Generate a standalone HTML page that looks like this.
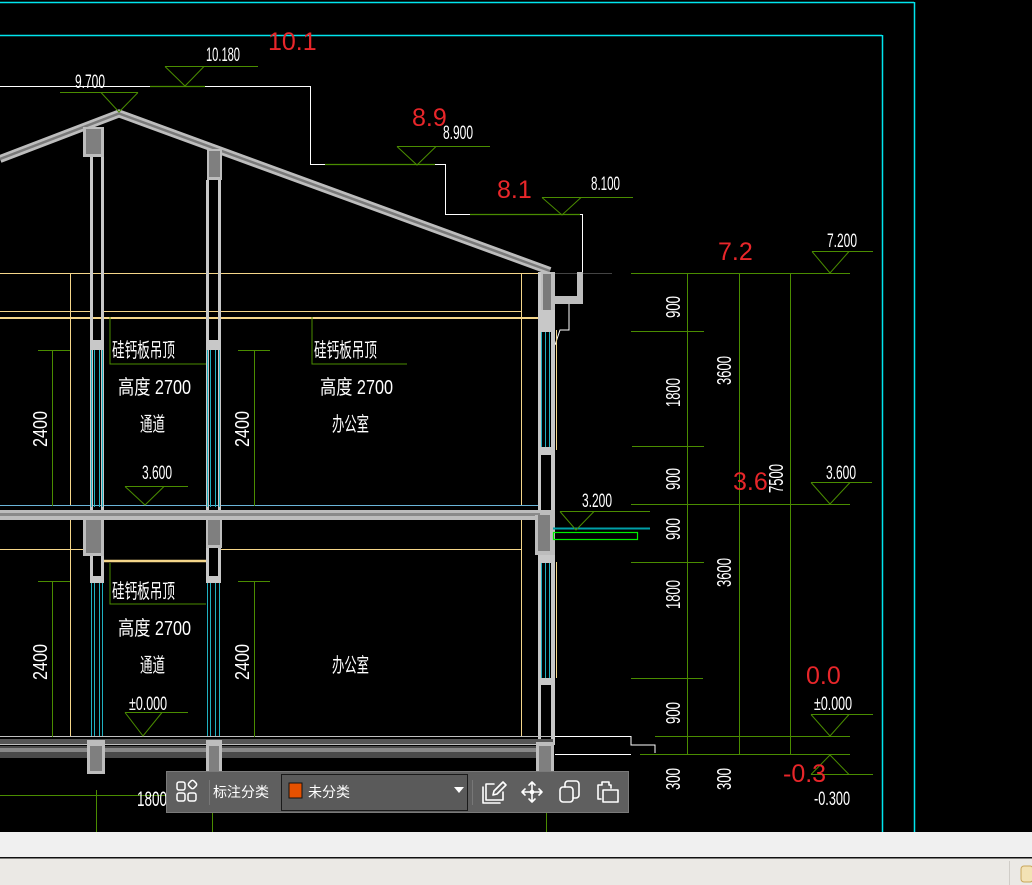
<!DOCTYPE html>
<html><head><meta charset="utf-8"><style>
html,body{margin:0;padding:0;background:#000;width:1032px;height:885px;overflow:hidden}
svg{display:block}
.t{font-family:"Liberation Sans Narrow","Liberation Sans","Noto Sans CJK SC",sans-serif;fill:#fff}
.c{font-family:"Liberation Sans","Noto Sans CJK SC",sans-serif;fill:#fff}
.r{font-family:"Liberation Sans",sans-serif;fill:#e8262a;font-size:25px}
</style></head><body>
<svg width="1032" height="885" viewBox="0 0 1032 885" xmlns="http://www.w3.org/2000/svg">
<rect width="1032" height="885" fill="#000"/>
<line x1="0" y1="2.5" x2="914" y2="2.5" stroke="#00e5ee" stroke-width="1.5"/>
<line x1="0" y1="35.5" x2="882" y2="35.5" stroke="#00e5ee" stroke-width="1.5"/>
<line x1="914.5" y1="2" x2="914.5" y2="832" stroke="#00e5ee" stroke-width="1.5"/>
<line x1="882.5" y1="35" x2="882.5" y2="832" stroke="#00e5ee" stroke-width="1.5"/>

<polyline points="0,86.5 310.5,86.5 310.5,164.5 445.5,164.5 445.5,214.5 582.5,214.5 582.5,297 569,297 569,330 560,330 555,345" fill="none" stroke="#fff" stroke-width="1"/>
<line x1="150" y1="86.5" x2="205" y2="86.5" stroke="#4a8c00" stroke-width="1.2"/>
<line x1="325" y1="164.5" x2="435" y2="164.5" stroke="#4a8c00" stroke-width="1.2"/>
<line x1="470" y1="214.5" x2="580" y2="214.5" stroke="#4a8c00" stroke-width="1.2"/>

<g stroke="#f5d68a" fill="none">
<line x1="0" y1="273.5" x2="540" y2="273.5"/>
<line x1="0" y1="311.5" x2="90" y2="311.5"/>
<line x1="104" y1="311.5" x2="522" y2="311.5"/>
<line x1="0" y1="318" x2="540" y2="318" stroke-width="2"/>
<line x1="70.5" y1="273" x2="70.5" y2="505"/>
<line x1="521.5" y1="273" x2="521.5" y2="505"/>
<line x1="0" y1="549.5" x2="90" y2="549.5"/>
<line x1="220" y1="549.5" x2="522" y2="549.5"/>
<line x1="104" y1="561" x2="207" y2="561" stroke-width="2.5"/>
<line x1="70.5" y1="520" x2="70.5" y2="737"/>
<line x1="521.5" y1="520" x2="521.5" y2="737"/>
<line x1="556.5" y1="330" x2="556.5" y2="450"/>
<line x1="556.5" y1="562" x2="556.5" y2="678"/>
</g>
<line x1="0" y1="505.5" x2="540" y2="505.5" stroke="#6ab4d8"/>
<line x1="555" y1="273.5" x2="612" y2="273.5" stroke="#444"/>

<polyline points="0,159 119,113.5 550,271" fill="none" stroke="#bdbdbd" stroke-width="8"/>
<polyline points="0,159 119,113.5 550,271" fill="none" stroke="#7a7a7a" stroke-width="2.5"/>
<path d="M540 272 h15 v24 h22 v-24 h6 v32 h-28 v14 h-15z" fill="#bdbdbd"/>
<path d="M543 274 h8 v38 h-8z" fill="#7a7a7a"/>

<rect x="83" y="127" width="21" height="30" fill="#bdbdbd"/><rect x="86" y="129" width="15" height="25" fill="#7f7f7f"/>
<rect x="207" y="149" width="15" height="31" fill="#bdbdbd"/><rect x="209" y="151" width="11" height="26" fill="#7f7f7f"/>
<g fill="#c8c8c8">
<rect x="90" y="157" width="3" height="353"/><rect x="101" y="157" width="3" height="353"/>
<rect x="206" y="180" width="3" height="330"/><rect x="218" y="180" width="3" height="330"/>
<rect x="90" y="340" width="14" height="10"/><rect x="206" y="340" width="15" height="10"/>
<rect x="538" y="272" width="3" height="240"/><rect x="551" y="310" width="4" height="200"/>
<rect x="539" y="310" width="16" height="22"/><rect x="539" y="447" width="16" height="8"/>
</g>
<g stroke="#1fb0c0" stroke-width="1">
<line x1="94.5" y1="350" x2="94.5" y2="507"/><line x1="99.5" y1="350" x2="99.5" y2="507"/><line x1="91.5" y1="350" x2="91.5" y2="507"/><line x1="102.5" y1="350" x2="102.5" y2="507"/>
<line x1="210.5" y1="350" x2="210.5" y2="507"/><line x1="215.5" y1="350" x2="215.5" y2="507"/><line x1="207.5" y1="350" x2="207.5" y2="507"/><line x1="219.5" y1="350" x2="219.5" y2="507"/>
<line x1="541.5" y1="332" x2="541.5" y2="447"/><line x1="545.5" y1="332" x2="545.5" y2="447"/><line x1="549.5" y1="332" x2="549.5" y2="447"/>
<line x1="94.5" y1="583" x2="94.5" y2="737"/><line x1="99.5" y1="583" x2="99.5" y2="737"/><line x1="91.5" y1="583" x2="91.5" y2="737"/><line x1="102.5" y1="583" x2="102.5" y2="737"/>
<line x1="210.5" y1="583" x2="210.5" y2="737"/><line x1="215.5" y1="583" x2="215.5" y2="737"/><line x1="207.5" y1="583" x2="207.5" y2="737"/><line x1="219.5" y1="583" x2="219.5" y2="737"/>
<line x1="541.5" y1="562" x2="541.5" y2="678"/><line x1="545.5" y1="562" x2="545.5" y2="678"/><line x1="549.5" y1="562" x2="549.5" y2="678"/>
</g>
<rect x="0" y="510" width="555" height="10" fill="#bdbdbd"/>
<rect x="0" y="513" width="540" height="3" fill="#8a8a8a"/>
<rect x="83" y="520" width="21" height="36" fill="#bdbdbd"/><rect x="86" y="520" width="15" height="33" fill="#7f7f7f"/>
<rect x="206" y="520" width="16" height="28" fill="#bdbdbd"/><rect x="208" y="520" width="12" height="25" fill="#7f7f7f"/>
<rect x="535" y="515" width="20" height="40" fill="#bdbdbd"/><rect x="538" y="515" width="12" height="36" fill="#7f7f7f"/>
<g fill="#c8c8c8">
<rect x="90" y="556" width="3" height="25"/><rect x="101" y="556" width="3" height="25"/><rect x="90" y="576" width="14" height="7"/>
<rect x="206" y="548" width="3" height="35"/><rect x="218" y="548" width="3" height="35"/><rect x="206" y="576" width="15" height="7"/>
<rect x="538" y="555" width="3" height="190"/><rect x="551" y="555" width="4" height="190"/>
<rect x="539" y="555" width="16" height="8"/><rect x="539" y="678" width="16" height="7"/>
</g>
<line x1="0" y1="736.5" x2="553" y2="736.5" stroke="#c0c0c0"/>
<rect x="0" y="739" width="553" height="5" fill="#555"/>
<line x1="0" y1="744.5" x2="553" y2="744.5" stroke="#c0c0c0"/>
<rect x="0" y="746" width="553" height="12" fill="#4a4a4a"/>
<rect x="0" y="748" width="553" height="4" fill="#888"/>
<g fill="#bdbdbd"><rect x="87" y="740" width="18" height="34"/><rect x="206" y="740" width="16" height="34"/><rect x="536" y="742" width="18" height="32"/></g>
<g fill="#7f7f7f"><rect x="90" y="746" width="12" height="25"/><rect x="209" y="746" width="10" height="25"/><rect x="539" y="746" width="12" height="25"/></g>
<polyline points="555,736.5 631,736.5 631,745 655,745 655,753" fill="none" stroke="#fff"/>
<line x1="555" y1="754.5" x2="631" y2="754.5" stroke="#fff"/>

<line x1="553" y1="528.5" x2="650" y2="528.5" stroke="#00a0a8" stroke-width="2"/>
<rect x="553.5" y="532.5" width="84" height="7" fill="none" stroke="#00ee00" stroke-width="1.2"/>

<g stroke="#4a8c00" stroke-width="1" fill="none">
<line x1="52.5" y1="350" x2="52.5" y2="506"/><line x1="38" y1="350.5" x2="70" y2="350.5"/>
<line x1="254.5" y1="350" x2="254.5" y2="506"/><line x1="238" y1="350.5" x2="270" y2="350.5"/>
<line x1="52.5" y1="581" x2="52.5" y2="737"/><line x1="38" y1="581.5" x2="70" y2="581.5"/>
<line x1="254.5" y1="581" x2="254.5" y2="737"/><line x1="238" y1="581.5" x2="270" y2="581.5"/>
<polyline points="110,317 110,364 206,364"/><polyline points="312,317 312,364 407,364"/>
<polyline points="110,563 110,604 206,604"/>
<polyline points="165,66.5 258,66.5"/><polyline points="165,66.5 185,86 204,66.5"/>
<polyline points="60,92.5 138,92.5"/><polyline points="101,92.5 119,112 138,92.5"/>
<polyline points="397,146.5 490,146.5"/><polyline points="397,146.5 417,165 436,146.5"/>
<polyline points="542,197.5 633,197.5"/><polyline points="542,197.5 562,215 581,197.5"/>
<polyline points="125,486.5 188,486.5"/><polyline points="125,486.5 145,505 164,486.5"/>
<polyline points="125,712.5 188,712.5"/><polyline points="125,712.5 143,736 162,712.5"/>
<polyline points="560,511.5 650,511.5"/><polyline points="560,511.5 576,530 594,511.5"/>
<line x1="631" y1="273.5" x2="850" y2="273.5"/><line x1="631" y1="331.5" x2="704" y2="331.5"/>
<line x1="632" y1="446.5" x2="704" y2="446.5"/><line x1="631" y1="504.5" x2="850" y2="504.5"/>
<line x1="631" y1="562.5" x2="704" y2="562.5"/><line x1="631" y1="678.5" x2="703" y2="678.5"/>
<line x1="655" y1="736.5" x2="850" y2="736.5"/><line x1="640" y1="754.5" x2="850" y2="754.5"/>
<line x1="687.5" y1="273" x2="687.5" y2="755"/><line x1="739.5" y1="273" x2="739.5" y2="755"/><line x1="790.5" y1="273" x2="790.5" y2="755"/>
<polyline points="812,251.5 873,251.5"/><polyline points="812,251.5 830,273 849,251.5"/>
<polyline points="811,482.5 872,482.5"/><polyline points="811,482.5 830,504 850,482.5"/>
<polyline points="811,714.5 873,714.5"/><polyline points="811,714.5 830,736 849,714.5"/>
<polyline points="811,774.5 873,774.5"/><polyline points="811,774.5 830,755 849,774.5"/>
<line x1="0" y1="795.5" x2="170" y2="795.5"/><line x1="96.5" y1="790" x2="96.5" y2="832"/>
<line x1="212.5" y1="813" x2="212.5" y2="832"/><line x1="546.5" y1="813" x2="546.5" y2="832"/>
</g>

<g class="t">
<text x="206" y="61" font-size="19" textLength="34" lengthAdjust="spacingAndGlyphs">10.180</text>
<text x="75" y="88" font-size="19" textLength="30" lengthAdjust="spacingAndGlyphs">9.700</text>
<text x="443" y="139" font-size="19" textLength="30" lengthAdjust="spacingAndGlyphs">8.900</text>
<text x="591" y="190" font-size="19" textLength="29" lengthAdjust="spacingAndGlyphs">8.100</text>
<text x="827" y="247" font-size="19" textLength="30" lengthAdjust="spacingAndGlyphs">7.200</text>
<text x="826" y="479" font-size="19" textLength="30" lengthAdjust="spacingAndGlyphs">3.600</text>
<text x="142" y="479" font-size="19" textLength="30" lengthAdjust="spacingAndGlyphs">3.600</text>
<text x="582" y="507" font-size="19" textLength="30" lengthAdjust="spacingAndGlyphs">3.200</text>
<text x="814" y="710" font-size="19" textLength="38" lengthAdjust="spacingAndGlyphs">±0.000</text>
<text x="129" y="710" font-size="19" textLength="38" lengthAdjust="spacingAndGlyphs">±0.000</text>
<text x="814" y="805" font-size="19" textLength="36" lengthAdjust="spacingAndGlyphs">-0.300</text>
<text x="137" y="806" font-size="21" textLength="30" lengthAdjust="spacingAndGlyphs">1800</text>
</g>
<g class="t" font-size="20">
<text x="112" y="357" textLength="63" lengthAdjust="spacingAndGlyphs">硅钙板吊顶</text>
<text x="314" y="357" textLength="63" lengthAdjust="spacingAndGlyphs">硅钙板吊顶</text>
<text x="112" y="598" textLength="63" lengthAdjust="spacingAndGlyphs">硅钙板吊顶</text>
<text x="118" y="394" textLength="73" lengthAdjust="spacingAndGlyphs">高度 2700</text>
<text x="320" y="394" textLength="73" lengthAdjust="spacingAndGlyphs">高度 2700</text>
<text x="118" y="635" textLength="73" lengthAdjust="spacingAndGlyphs">高度 2700</text>
<text x="140" y="431" textLength="25" lengthAdjust="spacingAndGlyphs">通道</text>
<text x="140" y="672" textLength="25" lengthAdjust="spacingAndGlyphs">通道</text>
<text x="332" y="431" textLength="37" lengthAdjust="spacingAndGlyphs">办公室</text>
<text x="332" y="672" textLength="37" lengthAdjust="spacingAndGlyphs">办公室</text>
</g>
<g class="t" font-size="20">
<text transform="translate(47,447) rotate(-90)" textLength="36" lengthAdjust="spacingAndGlyphs">2400</text>
<text transform="translate(249,447) rotate(-90)" textLength="36" lengthAdjust="spacingAndGlyphs">2400</text>
<text transform="translate(47,680) rotate(-90)" textLength="36" lengthAdjust="spacingAndGlyphs">2400</text>
<text transform="translate(249,680) rotate(-90)" textLength="36" lengthAdjust="spacingAndGlyphs">2400</text>
<text transform="translate(680,318) rotate(-90)" textLength="22" lengthAdjust="spacingAndGlyphs">900</text>
<text transform="translate(680,407) rotate(-90)" textLength="29" lengthAdjust="spacingAndGlyphs">1800</text>
<text transform="translate(680,490) rotate(-90)" textLength="22" lengthAdjust="spacingAndGlyphs">900</text>
<text transform="translate(680,540) rotate(-90)" textLength="22" lengthAdjust="spacingAndGlyphs">900</text>
<text transform="translate(680,609) rotate(-90)" textLength="29" lengthAdjust="spacingAndGlyphs">1800</text>
<text transform="translate(680,724) rotate(-90)" textLength="22" lengthAdjust="spacingAndGlyphs">900</text>
<text transform="translate(731,385) rotate(-90)" textLength="29" lengthAdjust="spacingAndGlyphs">3600</text>
<text transform="translate(731,587) rotate(-90)" textLength="29" lengthAdjust="spacingAndGlyphs">3600</text>
<text transform="translate(783,493) rotate(-90)" textLength="29" lengthAdjust="spacingAndGlyphs">7500</text>
<text transform="translate(680,790) rotate(-90)" textLength="22" lengthAdjust="spacingAndGlyphs">300</text>
<text transform="translate(731,790) rotate(-90)" textLength="22" lengthAdjust="spacingAndGlyphs">300</text>
</g>
<g class="r">
<text x="268" y="50">10.1</text>
<text x="412" y="126">8.9</text>
<text x="497" y="198">8.1</text>
<text x="718" y="260">7.2</text>
<text x="733" y="490">3.6</text>
<text x="806" y="684">0.0</text>
<text x="783" y="782">-0.3</text>
</g>

<rect x="166.5" y="771.5" width="462" height="41" fill="#5f5f5f" stroke="#7a7a7a"/>
<g fill="none" stroke="#fff" stroke-width="1.5">
<rect x="177" y="782" width="8" height="8" rx="2"/><rect x="177" y="793" width="8" height="8" rx="2"/><rect x="188" y="793" width="8" height="8" rx="2"/>
<rect x="189" y="781" width="7" height="7" rx="2" transform="rotate(45 192.5 784.5)"/>
</g>
<line x1="209.5" y1="780" x2="209.5" y2="805" stroke="#777"/>
<text x="213" y="797" class="c" font-size="14">标注分类</text>
<rect x="281.5" y="774.5" width="186" height="36" fill="#5a5a5a" stroke="#1a1a1a"/>
<rect x="289" y="783" width="13" height="15" fill="#e65100" stroke="#111"/>
<text x="308" y="797" class="c" font-size="14">未分类</text>
<path d="M454 787 h10 l-5 6z" fill="#fff"/>
<line x1="472.5" y1="780" x2="472.5" y2="805" stroke="#777"/>
<g fill="none" stroke="#fff" stroke-width="1.6" stroke-linejoin="round" stroke-linecap="round">
<path d="M483 787 v16 h17 M486 784 h8 M486 784 v16 h17 v-8"/>
<path d="M493 795 l1 -4 l9 -9 l3 3 l-9 9z"/>
<path d="M532 782 v20 M522 792 h20 M529 785 l3 -3 l3 3 M529 799 l3 3 l3 -3 M525 789 l-3 3 l3 3 M539 789 l3 3 l-3 3"/>
<circle cx="532" cy="792" r="1.5" fill="#fff"/>
<rect x="560" y="787" width="13" height="15" rx="3"/><path d="M565 787 v-3 a3 3 0 0 1 3 -3 h8 a3 3 0 0 1 3 3 v11 a3 3 0 0 1 -3 3 h-3"/>
<path d="M601 799 h-3 v-14 h4 v-3 h7 v3 h2 v3 M603 790 h15 v12 h-15z"/>
</g>

<rect x="0" y="832" width="1032" height="25" fill="#f0f0f0"/>
<rect x="0" y="857" width="1032" height="1.5" fill="#111"/>
<rect x="0" y="858.5" width="1032" height="26.5" fill="#ebe9e5"/>
<line x1="1009.5" y1="861" x2="1009.5" y2="885" stroke="#d0cdc8"/>
<rect x="1021" y="866" width="12" height="16" rx="3" fill="#f3e2b5" stroke="#c9a65a"/>
</svg>
</body></html>
